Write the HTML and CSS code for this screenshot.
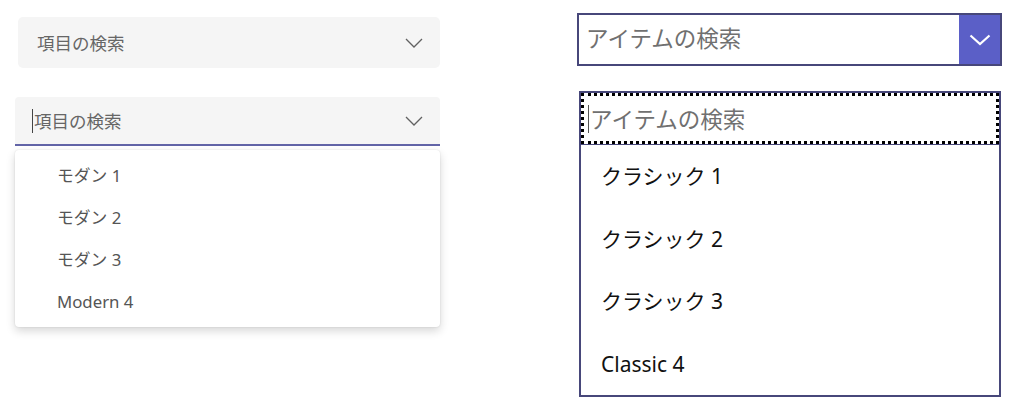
FILE: index.html
```html
<!DOCTYPE html>
<html>
  <head>
    <meta name="viewport" content="width=device-width, initial-scale=1" />
    <link rel="stylesheet" href="styles.css">
  </head>
  <body>
    <div class="page">
      <div class="modern">
        <div class="m-combo">
          <span class="m-text">項目の検索</span>
          <svg class="m-chev" width="18" height="10" viewBox="0 0 18 10"><path d="M1 1 L9 9 L17 1" fill="none" stroke="#616161" stroke-width="1.3"/></svg>
        </div>

        <div class="m-combo m-open">
          <span class="caret"></span>
          <span class="m-text">項目の検索</span>
          <svg class="m-chev" width="18" height="10" viewBox="0 0 18 10"><path d="M1 1 L9 9 L17 1" fill="none" stroke="#616161" stroke-width="1.3"/></svg>
        </div>
        <ul class="m-list">
          <li>モダン 1</li>
          <li>モダン 2</li>
          <li>モダン 3</li>
          <li>Modern 4</li>
        </ul>
      </div>

      <div class="classic">
        <div class="c-combo">
          <span class="c-text">アイテムの検索</span>
          <span class="c-btn">
            <svg width="22" height="12" viewBox="0 0 22 12"><path d="M1.5 1.5 L11 10 L20.5 1.5" fill="none" stroke="#fff" stroke-width="2.2"/></svg>
          </span>
        </div>

        <div class="c-open">
          <div class="c-input">
            <span class="caret c-caret"></span>
            <span class="c-text">アイテムの検索</span>
          </div>
          <ul class="c-list">
            <li>クラシック 1</li>
            <li>クラシック 2</li>
            <li>クラシック 3</li>
            <li>Classic 4</li>
          </ul>
        </div>
      </div>
    </div>
  </body>
</html>
```

FILE: styles.css
```css
* {
  box-sizing: border-box;
}

body {
  margin: 0;
  background: #fff;
  font-family: "Noto Sans", "Noto Sans CJK JP", sans-serif;
}

ul {
  list-style: none;
  margin: 0;
  padding: 0;
}

.page {
  display: flex;
}

/* modern (left) */
.modern {
  width: 577px;
  display: flex;
  flex-direction: column;
}

.m-combo {
  display: flex;
  align-items: center;
  width: 422px;
  height: 51px;
  margin: 17px 0 0 18px;
  padding: 0 17px 0 19px;
  background: #f5f5f5;
  border-radius: 5px;
}

.m-text {
  flex: 1;
  font-size: 17.5px;
  color: #666;
}

.m-open {
  width: 425px;
  height: 49px;
  margin: 29px 0 0 15px;
  padding-left: 17px;
  padding-right: 17px;
  border-radius: 4px 4px 0 0;
  border-bottom: 2px solid #6264a7;
}

.caret {
  width: 1px;
  height: 24px;
  background: #444;
  margin-right: 1px;
}

.m-list {
  width: 425px;
  margin: 4px 0 0 15px;
  padding: 5px 0 4px;
  background: #fff;
  border-radius: 4px;
  box-shadow: 0 4px 10px rgba(0, 0, 0, 0.16), 0 0 2px rgba(0, 0, 0, 0.12);
}

.m-list li {
  height: 42px;
  line-height: 42px;
  padding-left: 42px;
  font-size: 16.8px;
  color: #555;
}

/* classic (right) */
.classic {
  display: flex;
  flex-direction: column;
}

.c-combo {
  display: flex;
  width: 425px;
  height: 53px;
  margin-top: 13px;
  border: 2px solid #47477a;
}

.c-text {
  flex: 1;
  font-size: 22.5px;
  color: #707070;
}

.c-combo .c-text {
  padding-left: 7px;
  line-height: 48px;
}

.c-btn {
  width: 42px;
  display: flex;
  align-items: center;
  justify-content: center;
  background: #5b5fc7;
  border-left: 1px solid #fff;
}

.c-open {
  width: 422px;
  height: 306px;
  margin: 25px 0 0 2px;
  border: 2px solid #47477a;
}

.c-input {
  display: flex;
  align-items: center;
  height: 51px;
  padding-left: 4px;
  border: 3px dotted #000;
}

.c-caret {
  height: 28px;
  background: #555;
}

.c-list {
  border-top: 1px solid #47477a;
}

.c-list li {
  height: 62.5px;
  line-height: 62.5px;
  padding-left: 20px;
  font-size: 21px;
  color: #111;
}
```
